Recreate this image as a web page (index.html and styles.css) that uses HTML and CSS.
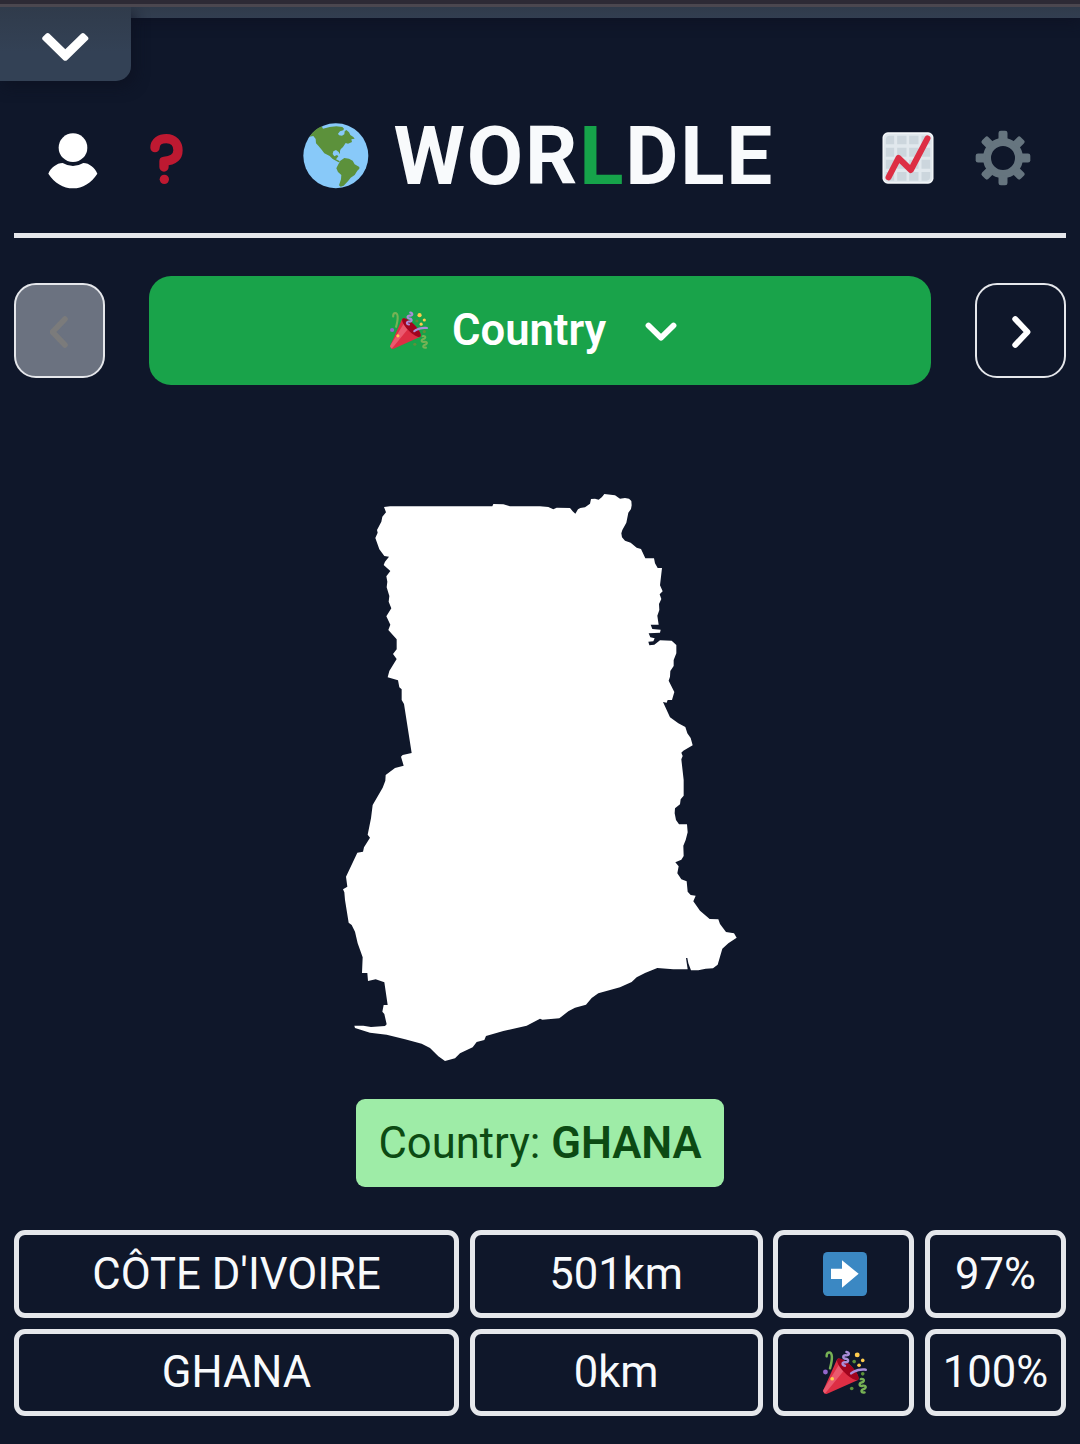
FILE: index.html
```html
<!DOCTYPE html>
<html lang="en">
<head>
<meta charset="utf-8">
<title>Worldle</title>
<link rel="stylesheet" href="styles.css">
</head>
<body>
<svg class="defs" aria-hidden="true">
  <symbol id="party" viewBox="0 0 36 36">
    <path fill="#DD2E44" d="M11.626 7.488c-.112.112-.197.247-.268.395l-.008-.008L.134 33.141l.011.011c-.208.403.14 1.223.853 1.937.713.713 1.533 1.061 1.936.853l.01.01L28.21 24.735l-.008-.009c.147-.07.282-.155.395-.269 1.562-1.562-.971-6.627-5.656-11.313-4.687-4.686-9.752-7.218-11.315-5.656z"/>
    <path fill="#EA596E" d="M13 12L.416 32.506l-.282.635.011.011c-.208.403.14 1.223.853 1.937.232.232.473.408.709.557L17 17l-4-5z"/>
    <path fill="#A0041E" d="M23.012 13.066c4.67 4.672 7.263 9.652 5.789 11.124-1.473 1.474-6.453-1.118-11.126-5.788-4.671-4.672-7.263-9.654-5.79-11.127 1.474-1.473 6.454 1.119 11.127 5.791z"/>
    <path fill="#AA8DD8" d="M18.59 13.609c-.199.161-.459.245-.734.215-.868-.094-1.598-.396-2.109-.873-.541-.505-.808-1.183-.735-1.862.128-1.192 1.324-2.286 3.363-2.066.793.085 1.147-.17 1.159-.292.014-.121-.277-.446-1.07-.532-.868-.094-1.598-.396-2.11-.873-.541-.505-.809-1.183-.735-1.862.13-1.192 1.325-2.286 3.362-2.065.578.062.883-.057 1.012-.134.103-.063.144-.123.148-.158.012-.121-.275-.446-1.07-.532-.549-.06-.947-.552-.886-1.102.059-.549.55-.946 1.101-.886 2.037.219 2.973 1.542 2.844 2.735-.13 1.194-1.325 2.286-3.364 2.067-.578-.063-.88.057-1.01.134-.103.062-.145.123-.149.157-.013.122.276.446 1.071.532 2.037.22 2.973 1.542 2.844 2.735-.129 1.192-1.324 2.286-3.362 2.065-.578-.062-.882.058-1.012.134-.104.064-.144.124-.148.158-.013.121.276.446 1.07.532.548.06.947.553.886 1.102-.028.274-.167.511-.366.671z"/>
    <path fill="#77B255" d="M30.661 22.857c1.973-.557 3.334.323 3.658 1.478.324 1.154-.378 2.615-2.35 3.17-.77.216-1.001.584-.97.701.034.118.425.312 1.193.095 1.972-.555 3.333.325 3.657 1.479.326 1.155-.378 2.614-2.351 3.17-.769.216-1.001.585-.967.702.033.117.423.311 1.192.095.53-.149 1.084.16 1.233.691.148.532-.161 1.084-.693 1.234-1.971.555-3.333-.323-3.659-1.479-.324-1.154.379-2.613 2.353-3.169.77-.217 1.001-.584.967-.702-.032-.117-.422-.312-1.19-.096-1.974.556-3.334-.322-3.659-1.479-.325-1.154.378-2.613 2.351-3.17.768-.215.999-.585.967-.701-.034-.118-.423-.312-1.192-.096-.532.15-1.083-.16-1.233-.691-.149-.53.161-1.082.693-1.232z"/>
    <path fill="#AA8DD8" d="M23.001 20.16c-.294 0-.584-.129-.782-.375-.345-.432-.274-1.061.156-1.406.218-.175 5.418-4.259 12.767-3.208.547.078.927.584.849 1.131-.078.546-.58.93-1.132.848-6.493-.922-11.187 2.754-11.233 2.791-.186.148-.406.219-.625.219z"/>
    <path fill="#77B255" d="M5.754 16c-.095 0-.192-.014-.288-.042-.529-.159-.829-.716-.67-1.245 1.133-3.773 2.16-9.794.898-11.364-.141-.178-.354-.353-.842-.316-.938.072-.849 2.051-.848 2.071.042.551-.372 1.031-.922 1.072-.559.034-1.031-.372-1.072-.923-.103-1.379.326-4.035 2.692-4.214 1.056-.08 1.933.287 2.552 1.057 2.371 2.951-.036 11.506-.542 13.192-.13.433-.528.712-.958.712z"/>
    <g fill="#5C913B"><circle cx="25.5" cy="9.5" r="1.5"/><circle cx="32.5" cy="19.5" r="1.5"/><circle cx="23.5" cy="31.5" r="1.5"/></g>
    <circle fill="#9266CC" cx="2" cy="18" r="2"/>
    <g fill="#FFCC4D"><circle cx="28" cy="4" r="2"/><circle cx="32.5" cy="8.5" r="1.5"/><circle cx="29.5" cy="12.5" r="1.5"/><circle cx="7.5" cy="23.5" r="1.5"/></g>
  </symbol>
</svg>

<div class="strip"></div>
<div class="drawer">
  <button class="drawer-tab" aria-label="Open menu">
    <svg width="48" height="30" viewBox="0 0 48 30"><path d="M1.700 6L5 2.700Q6.700 1.200 8.400 2.700L24.300 18.300L40.200 2.700Q41.900 1.200 43.600 2.700L46.900 6Q48 7.500 46.900 8.800L26 29.200Q24.300 30.300 22.600 29.200L1.700 8.800Q.6 7.500 1.700 6Z" fill="#fff"/></svg>
  </button>
</div>

<main class="page">
  <header class="header">
    <div class="tools">
      <svg width="50" height="56" viewBox="146 398 150 168"><g fill="#fff"><circle cx="221" cy="442" r="43"/><path d="M190 488Q221 506 252 488C270 488 287 503 294 520C276 548 250 564 221 564S165 548 147 520C154 503 172 488 190 488Z"/></g></svg>
      <svg width="34" height="52" viewBox="452 399 102 156"><path d="M467 443C467 426 482 416 501 416C523 416 536 431 536 451C536 472 520 482 494 484V501" fill="none" stroke="#be1931" stroke-width="28" stroke-linecap="round" stroke-linejoin="round"/><circle cx="495" cy="538" r="14" fill="#be1931"/></svg>
    </div>
    <h1 class="brand">
      <svg width="66" height="66" viewBox="38 38 198 198"><circle cx="136.500" cy="136.500" r="97.500" fill="#88c9f9"/><path fill="#5c913b" d="M57 79C68 64 80 54 94 48L98 55L118 50L138 48L156 50L161 55L159 60L149 63L143 70L146 75L155 76L162 72L163 63L168 59L176 66L180 74L189 80L193 85L183 87L185 95L173 100L166 98L158 110L151 117L149 122L149 132L145 125L137 119L129 123L127 131L132 138L140 134L144 138L137 147L149 153L145 156L127 146L118 137L102 129L94 118L84 106L77 99L76 86L69 77Z"/><path fill="#5c913b" d="M150 151L162 143L176 145L187 151L193 162L207 170L207 175L201 181L193 194L181 202L174 211L160 226L151 229L146 225L152 207L153 194L143 185L138 174L144 162Z"/></svg>
      <span class="word">WOR<span class="accent">L</span>DLE</span>
    </h1>
    <div class="tools tools-right">
      <svg width="52" height="52" viewBox="66.500 66 156 156"><rect x="68" y="67" width="153" height="154" rx="16" fill="#f5f8fa"/><rect x="72" y="71" width="145" height="146" rx="13" fill="#e1e8ed"/><path fill="#ccd6dd" d="M78 90Q78 77 90 77H103V103H78ZM112 77H140V103H112ZM148 77H176V103H148ZM185 77H200Q211 77 211 90V103H185ZM78 113H103V140H78ZM112 113H140V140H112ZM148 113H176V140H148ZM185 113H211V140H185ZM78 149H103V176H78ZM112 149H140V176H112ZM148 149H176V176H148ZM185 149H211V176H185ZM78 186H103V212H90Q78 212 78 199ZM112 186H140V212H112ZM148 186H176V212H148ZM185 186H211V199Q211 212 200 212H185Z"/><path d="M86 202L116 144L153 180L203 85" fill="none" stroke="#dd2e44" stroke-width="18" stroke-linecap="round" stroke-linejoin="round"/></svg>
      <svg width="56" height="56" viewBox="-84 -84 168 168"><circle r="48" fill="none" stroke="#66757f" stroke-width="24"/><g fill="#66757f"><rect id="tooth" x="-13.500" y="-82" width="27" height="30" rx="7"/><use href="#tooth" transform="rotate(45)"/><use href="#tooth" transform="rotate(90)"/><use href="#tooth" transform="rotate(135)"/><use href="#tooth" transform="rotate(180)"/><use href="#tooth" transform="rotate(225)"/><use href="#tooth" transform="rotate(270)"/><use href="#tooth" transform="rotate(315)"/></g></svg>
    </div>
  </header>

  <nav class="rounds">
    <button class="step" disabled aria-label="Previous"><svg width="20" height="34" viewBox="0 0 20 34"><path d="M15 4L2.500 17L15 30" fill="none" stroke="#7b7b7b" stroke-width="5.500" stroke-linecap="round" stroke-linejoin="round"/></svg></button>
    <button class="round"><svg class="popper" width="38" height="38"><use href="#party"/></svg><span>Country</span><svg class="caret" width="32" height="20" viewBox="0 0 32 20"><path d="M3.500 3.500L16 15.800L28.500 3.500" fill="none" stroke="#fff" stroke-width="5.800" stroke-linecap="round" stroke-linejoin="round"/></svg></button>
    <button class="step" aria-label="Next"><svg width="20" height="34" viewBox="0 0 20 34"><path d="M4.200 4L16.500 17L4.200 30" fill="none" stroke="#fff" stroke-width="5.800" stroke-linecap="round" stroke-linejoin="round"/></svg></button>
  </nav>

  <svg class="shape" viewBox="0 0 1230 1800" role="img" aria-label="Country outline"><path fill="#fff" d="M147 81L165 79H472L475 72L505 73L525 79H615L640 81L655 88L665 83L705 84L713 94L721 101L729 88L736 84L750 82L765 71L768 57L780 56L791 59L801 51L808 42L840 46L855 56L870 54L882 56L889 63L890 76L888 87L880 98L874 128L862 150L859 160L861 172L870 182L887 188L905 203L918 207L931 235H957L960 250L968 264H981L975 316L983 334L974 343L979 357L972 372L973 390L967 407L971 434H947L952 447L977 449L975 458L941 460L946 472L959 475L955 484L940 485L943 496L958 494L975 481L1010 482L1024 495V520L1016 540V558L1006 573L1005 590L1001 602L1018 636L1011 660H998L995 668L984 666L1005 712L1030 730L1051 741L1057 760L1067 774L1073 796L1045 812L1039 818L1043 828L1039 838L1046 900V947L1037 958L1035 973L1020 985L1019 1000L1023 1020L1032 1033H1056L1058 1057L1052 1080L1045 1097L1046 1128L1039 1139L1021 1147L1031 1159L1027 1180L1039 1198L1055 1204L1058 1235L1067 1245L1082 1247L1075 1264L1095 1292L1124 1317L1150 1318L1155 1332L1173 1356L1197 1360L1205 1373L1180 1390L1162 1406L1155 1430L1148 1454L1134 1465L1112 1466L1090 1471H1068L1060 1450L1057 1434H1053L1058 1468H1015L967 1464L930 1479L905 1492L890 1506L855 1522L790 1540L770 1554L753 1574L720 1583L700 1594L673 1615L622 1619L615 1616L575 1637L505 1653L453 1668L448 1680L425 1686L413 1702L375 1720L360 1735L330 1743L310 1729L285 1704L260 1691L210 1678L155 1664L105 1658L60 1644L58 1637H85L108 1641L150 1638L155 1633L148 1602L142 1595L146 1575H158L148 1507L122 1498L99 1503L97 1479H81L83 1432L68 1390L60 1355L50 1335L41 1328L30 1260L28 1237L24 1228L37 1220L33 1190L67 1118L84 1115L87 1102L105 1073L98 1064L108 1015L113 975L143 923L151 902L152 885L180 864L206 857L198 830L203 825L230 819L207 672L200 660V628L193 622L189 601L158 592L163 573L185 537L174 522L185 508V478L160 450L166 434L154 409L169 385L161 365L163 348L155 322L157 305L154 289L166 273L146 255L150 245L162 230L148 228L133 208L121 174L128 158L126 150L139 125L142 110L153 97Z"/></svg>

  <p class="answer">Country: <b>GHANA</b></p>

  <div class="guesses">
    <div class="cell">CÔTE D'IVOIRE</div>
    <div class="cell">501km</div>
    <div class="cell icon"><svg width="44" height="44" viewBox="189 96 132 132"><rect x="189" y="96" width="132" height="132" rx="14" fill="#3b88c3"/><path fill="#fff" d="M213 146H246V121L296 161.500L246 203V177H213Z"/></svg></div>
    <div class="cell">97%</div>
    <div class="cell">GHANA</div>
    <div class="cell">0km</div>
    <div class="cell icon"><svg class="popper" width="44" height="44"><use href="#party"/></svg></div>
    <div class="cell">100%</div>
  </div>
</main>
</body>
</html>
```
FILE: styles.css
```css
* { box-sizing: border-box; }

body {
  margin: 0;
  height: 1444px;
  overflow: hidden;
  background: #0f172a;
  color: #f8fafc;
  font-family: Roboto, "Liberation Sans", sans-serif;
  font-size: 43.6px;
}

svg { display: block; flex: none; }
button { font: inherit; color: inherit; padding: 0; }

.defs { position: absolute; width: 0; height: 0; }

.strip {
  height: 7px;
  background: #2d2a35;
  border-bottom: 3px solid #4b474f;
}

.drawer {
  height: 11px;
  background: linear-gradient(#303b4b, #323e50);
  box-shadow: 0 4px 14px rgba(14, 16, 34, .8);
  clip-path: inset(0 0 -100px 0);
}

.drawer-tab {
  display: flex;
  width: 131px;
  height: 74px;
  padding: 24px 0 0 41px;
  border: 0;
  border-radius: 0 0 15px 0;
  background: linear-gradient(#303b4b, #334155 60%);
  box-shadow: 4px 6px 14px rgba(13, 17, 33, .7);
  clip-path: inset(0 -30px -30px 0);
}

.page { padding: 63px 14px 0; }

.header {
  display: grid;
  grid-template-columns: 288px 1fr 184px;
  height: 157px;
  border-bottom: 5px solid #e5e7eb;
}

.tools {
  display: flex;
  align-items: flex-start;
  gap: 52px;
  padding: 52px 0 0 34.400px;
}

.tools-right { gap: 41px; padding: 51px 0 0; }
.tools-right svg:last-child { margin-top: -2px; }

.brand {
  display: flex;
  align-items: flex-start;
  gap: 25px;
  margin: 0;
  font-size: 81.8px;
  font-weight: 700;
  line-height: 96px;
  letter-spacing: 1.8px;
}

.brand svg { margin: 42px 0 0 0.500px; }
.word { margin-top: 27px; }
.accent { color: #16a34a; }

.rounds {
  display: flex;
  align-items: center;
  justify-content: space-between;
  margin-top: 38px;
}

.step {
  display: flex;
  align-items: center;
  justify-content: center;
  width: 91px;
  height: 95px;
  border: 2px solid #e5e7eb;
  border-radius: 22px;
  background: none;
}

.step svg { margin-top: 2px; }
.step:disabled { background: #6b7280; }

.round {
  display: flex;
  align-items: center;
  width: 782px;
  height: 109px;
  padding-left: 241px;
  border: 0;
  border-radius: 22px;
  background: #19a34a;
  color: #fff;
  font-weight: 600;
}

.popper { margin-bottom: 1px; }
.round span { margin-left: 24px; }
.round .caret { margin: 2px 0 0 39px; }

.shape {
  width: 410px;
  height: 600px;
  margin: 95px auto 0;
}

.answer {
  width: 368px;
  height: 88px;
  margin: 19px auto 0;
  border-radius: 9px;
  background: #9eeca7;
  color: #0c4a13;
  line-height: 90px;
  text-align: center;
  white-space: nowrap;
}

.answer b { font-weight: 600; }

.guesses {
  display: grid;
  grid-template-columns: 445px 293px 141px 141px;
  grid-template-rows: 88px 87px;
  justify-content: space-between;
  row-gap: 11px;
  margin-top: 43px;
}

.cell {
  display: flex;
  align-items: center;
  justify-content: center;
  border: 5px solid #e5e7eb;
  border-radius: 11px;
  white-space: nowrap;
}

.icon { padding-left: 3px; }
```
